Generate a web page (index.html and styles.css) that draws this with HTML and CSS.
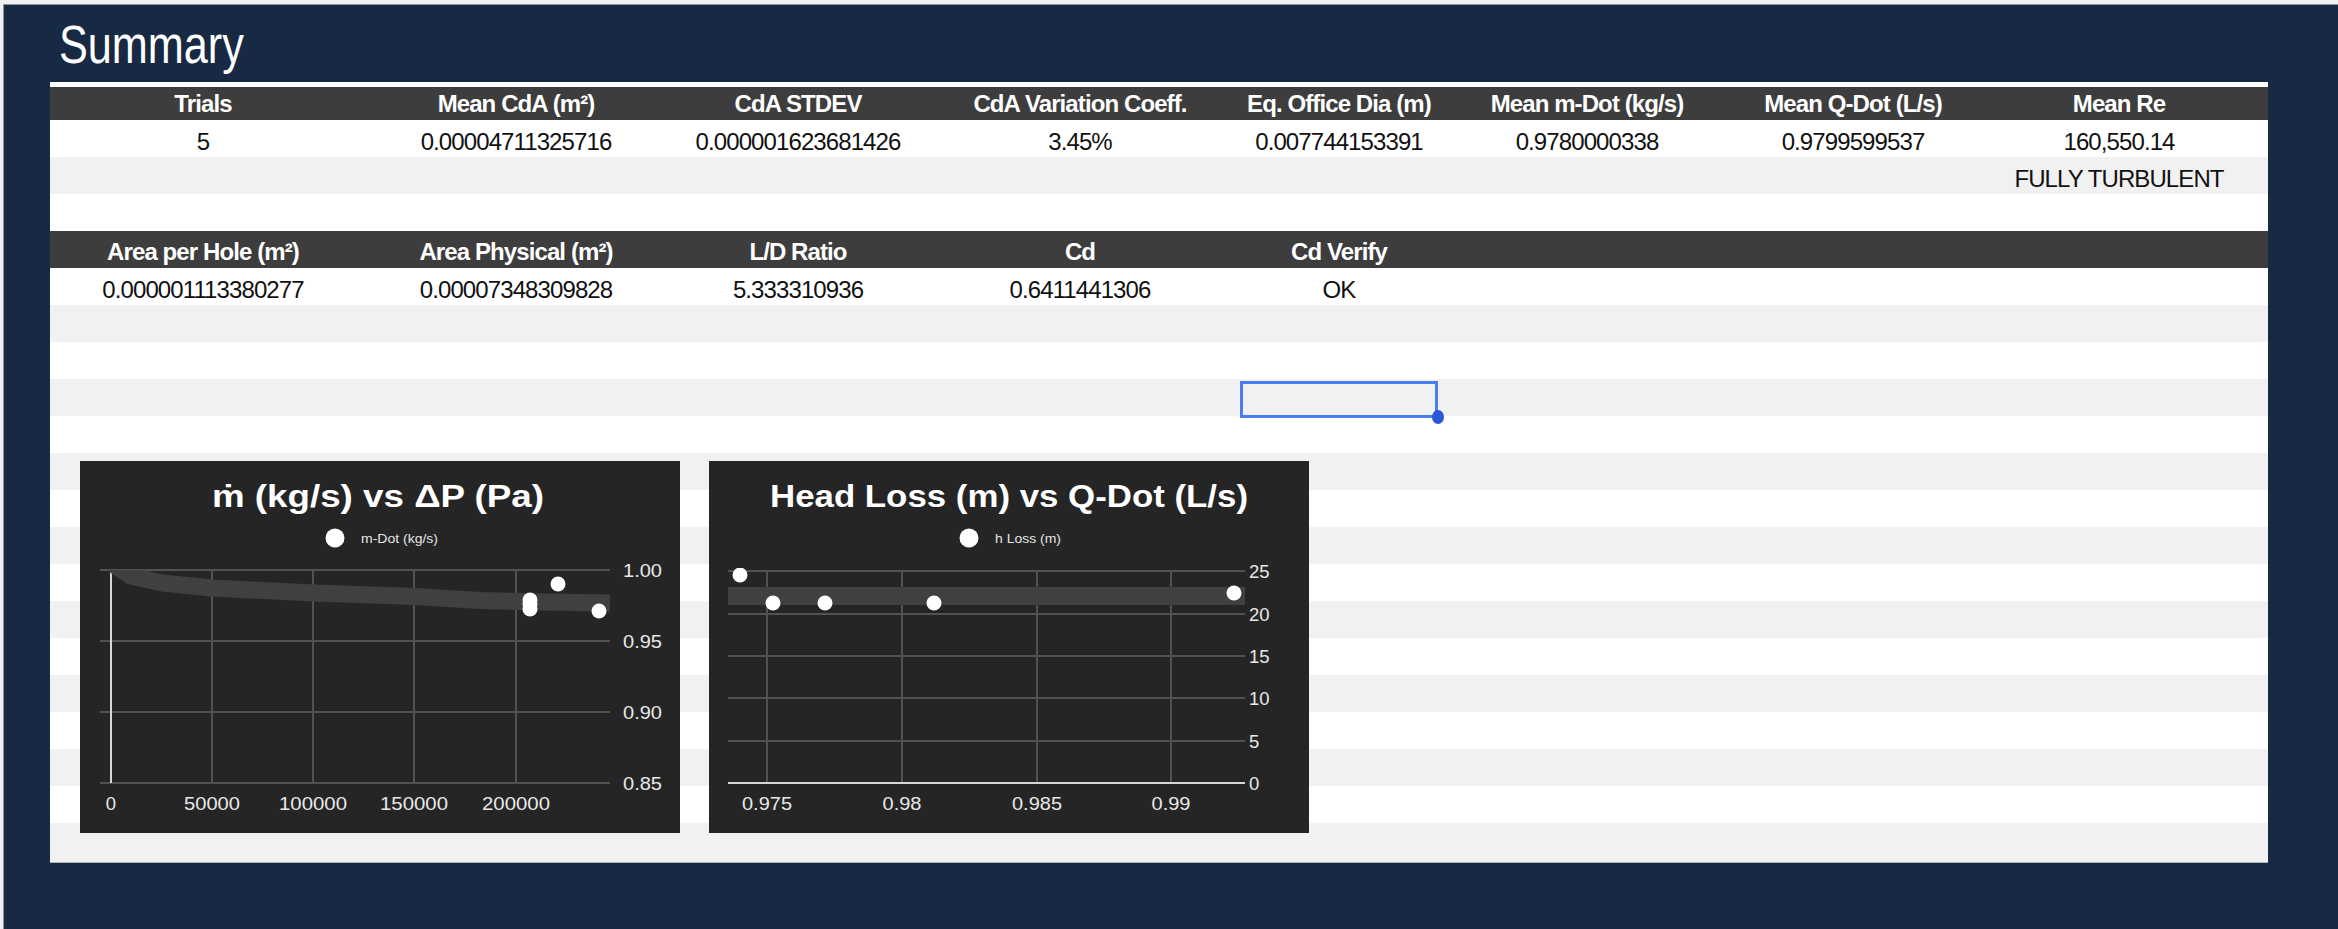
FILE: index.html
```html
<!DOCTYPE html>
<html lang="en">
<head>
<meta charset="utf-8">
<title>Summary</title>
<link rel="stylesheet" href="styles.css">
</head>
<body>
<div class="sheet">
  <h1 class="title">Summary</h1>
  <div class="panel">
    <div class="row head head1">
      <div class="cell">Trials</div>
      <div class="cell">Mean CdA (m²)</div>
      <div class="cell">CdA STDEV</div>
      <div class="cell">CdA Variation Coeff.</div>
      <div class="cell">Eq. Office Dia (m)</div>
      <div class="cell">Mean m-Dot (kg/s)</div>
      <div class="cell">Mean Q-Dot (L/s)</div>
      <div class="cell">Mean Re</div>
    </div>
    <div class="row">
      <div class="cell">5</div>
      <div class="cell">0.00004711325716</div>
      <div class="cell">0.000001623681426</div>
      <div class="cell">3.45%</div>
      <div class="cell">0.007744153391</div>
      <div class="cell">0.9780000338</div>
      <div class="cell">0.9799599537</div>
      <div class="cell">160,550.14</div>
    </div>
    <div class="row alt">
      <div class="cell"></div><div class="cell"></div><div class="cell"></div><div class="cell"></div>
      <div class="cell"></div><div class="cell"></div><div class="cell"></div>
      <div class="cell">FULLY TURBULENT</div>
    </div>
    <div class="row"></div>
    <div class="row head">
      <div class="cell">Area per Hole (m²)</div>
      <div class="cell">Area Physical (m²)</div>
      <div class="cell">L/D Ratio</div>
      <div class="cell">Cd</div>
      <div class="cell">Cd Verify</div>
    </div>
    <div class="row">
      <div class="cell">0.000001113380277</div>
      <div class="cell">0.00007348309828</div>
      <div class="cell">5.333310936</div>
      <div class="cell">0.6411441306</div>
      <div class="cell">OK</div>
    </div>
    <div class="row alt"></div>
    <div class="row"></div>
    <div class="row alt">
      <div class="cell"></div><div class="cell"></div><div class="cell"></div><div class="cell"></div>
      <div class="cell selected"><span class="handle"></span></div>
    </div>
    <div class="row"></div>
    <div class="row alt"></div>
    <div class="row"></div>
    <div class="row alt"></div>
    <div class="row"></div>
    <div class="row alt"></div>
    <div class="row"></div>
    <div class="row alt"></div>
    <div class="row"></div>
    <div class="row alt"></div>
    <div class="row"></div>
    <div class="row alt last"></div>

    <div class="chart chart-mdot">
      <svg width="600" height="372" viewBox="0 0 600 372">
        <defs>
          <clipPath id="plot1"><rect x="20" y="109" width="510" height="213"/></clipPath>
        </defs>
        <text class="c-title" x="298" y="46" text-anchor="middle" textLength="332" lengthAdjust="spacingAndGlyphs">ṁ (kg/s) vs ΔP (Pa)</text>
        <circle cx="255" cy="77" r="9.5" fill="#fff"/>
        <text class="c-legend" x="281" y="82" textLength="77" lengthAdjust="spacingAndGlyphs">m-Dot (kg/s)</text>
        <g class="grid">
          <line x1="20" y1="109" x2="530" y2="109"/>
          <line x1="20" y1="180" x2="530" y2="180"/>
          <line x1="20" y1="251" x2="530" y2="251"/>
          <line x1="20" y1="322" x2="530" y2="322"/>
          <line x1="132" y1="109" x2="132" y2="322"/>
          <line x1="233" y1="109" x2="233" y2="322"/>
          <line x1="334" y1="109" x2="334" y2="322"/>
          <line x1="436" y1="109" x2="436" y2="322"/>
        </g>
        <line class="axis" x1="31" y1="109" x2="31" y2="322"/>
        <polyline class="band" clip-path="url(#plot1)" points="33,103 37,106 51,115 82,122 132,127 234,132 335,135.5 400,139.5 436,140.5 530,142"/>
        <g fill="#fff">
          <circle cx="450" cy="139" r="7.5"/>
          <circle cx="450" cy="143" r="7.5"/>
          <circle cx="450" cy="148" r="7.5"/>
          <circle cx="478" cy="123" r="7.5"/>
          <circle cx="519" cy="150" r="7.5"/>
        </g>
        <g class="c-label">
          <text x="543" y="115.5" textLength="39" lengthAdjust="spacingAndGlyphs">1.00</text>
          <text x="543" y="186.5" textLength="39" lengthAdjust="spacingAndGlyphs">0.95</text>
          <text x="543" y="257.5" textLength="39" lengthAdjust="spacingAndGlyphs">0.90</text>
          <text x="543" y="328.5" textLength="39" lengthAdjust="spacingAndGlyphs">0.85</text>
        </g>
        <g class="c-label" text-anchor="middle">
          <text x="31" y="349">0</text>
          <text x="132" y="349" textLength="56" lengthAdjust="spacingAndGlyphs">50000</text>
          <text x="233" y="349" textLength="68" lengthAdjust="spacingAndGlyphs">100000</text>
          <text x="334" y="349" textLength="68" lengthAdjust="spacingAndGlyphs">150000</text>
          <text x="436" y="349" textLength="68" lengthAdjust="spacingAndGlyphs">200000</text>
        </g>
      </svg>
    </div>

    <div class="chart chart-head">
      <svg width="600" height="372" viewBox="0 0 600 372">
        <defs>
          <clipPath id="plot2"><rect x="19" y="107" width="530" height="220"/></clipPath>
        </defs>
        <text class="c-title" x="300" y="46" text-anchor="middle" textLength="478" lengthAdjust="spacingAndGlyphs">Head Loss (m) vs Q-Dot (L/s)</text>
        <circle cx="260" cy="77" r="9.5" fill="#fff"/>
        <text class="c-legend" x="286" y="82" textLength="66" lengthAdjust="spacingAndGlyphs">h Loss (m)</text>
        <g class="grid">
          <line x1="19" y1="110" x2="536" y2="110"/>
          <line x1="19" y1="153" x2="536" y2="153"/>
          <line x1="19" y1="195" x2="536" y2="195"/>
          <line x1="19" y1="237" x2="536" y2="237"/>
          <line x1="19" y1="280" x2="536" y2="280"/>
          <line x1="58" y1="110" x2="58" y2="322"/>
          <line x1="193" y1="110" x2="193" y2="322"/>
          <line x1="328" y1="110" x2="328" y2="322"/>
          <line x1="462" y1="110" x2="462" y2="322"/>
        </g>
        <line class="axis" x1="19" y1="322" x2="536" y2="322"/>
        <rect class="band-rect" x="19" y="126" width="517" height="18"/>
        <g fill="#fff" clip-path="url(#plot2)">
          <circle cx="31" cy="114" r="7.5"/>
          <circle cx="64" cy="142" r="7.5"/>
          <circle cx="116" cy="142" r="7.5"/>
          <circle cx="225" cy="142" r="7.5"/>
          <circle cx="525" cy="132" r="7.5"/>
        </g>
        <g class="c-label">
          <text x="540" y="116.5">25</text>
          <text x="540" y="159.5">20</text>
          <text x="540" y="201.5">15</text>
          <text x="540" y="243.5">10</text>
          <text x="540" y="286.5">5</text>
          <text x="540" y="328.5">0</text>
        </g>
        <g class="c-label" text-anchor="middle">
          <text x="58" y="349" textLength="50" lengthAdjust="spacingAndGlyphs">0.975</text>
          <text x="193" y="349" textLength="39" lengthAdjust="spacingAndGlyphs">0.98</text>
          <text x="328" y="349" textLength="50" lengthAdjust="spacingAndGlyphs">0.985</text>
          <text x="462" y="349" textLength="39" lengthAdjust="spacingAndGlyphs">0.99</text>
        </g>
      </svg>
    </div>
  </div>
</div>
</body>
</html>
```
FILE: styles.css
```css
html, body {
  margin: 0;
  padding: 0;
}
body {
  background: #f2f2f2;
  font-family: "Liberation Sans", Arial, sans-serif;
  overflow: hidden;
}
.sheet {
  box-sizing: border-box;
  margin: 4px 0 0 3px;
  height: 925px;
  background: #172943;
  border-top: 1px solid #8d949e;
  border-left: 1px solid #8d949e;
  padding: 13px 0 0 46px;
}
.title {
  margin: 0 0 11px 9px;
  font-family: "Liberation Sans", Arial, sans-serif;
  font-weight: normal;
  font-size: 53px;
  line-height: 53px;
  color: #ffffff;
  transform: scaleX(0.815);
  transform-origin: left center;
}
.panel {
  position: relative;
  width: 2218px;
  background: #f1f1f1;
  padding-top: 5px;
  padding-bottom: 2px;
  border-bottom: 1px solid #aab1ba;
  box-shadow: inset 0 5px 0 #ffffff;
}
.row {
  display: grid;
  grid-template-columns: 306px 320px 244px 320px 198px 298px 234px 298px;
  height: 37px;
  align-items: end;
  background: #ffffff;
  color: #111111;
  font-size: 24px;
  letter-spacing: -0.9px;
}
.row.alt {
  background: #f1f1f1;
}
.row.head {
  background: #3d3d3d;
  color: #ffffff;
  font-weight: bold;
}
.row.head1 {
  height: 33px;
}
.cell {
  line-height: 24px;
  padding-bottom: 3px;
  text-align: center;
  white-space: nowrap;
}
.head .cell {
  padding-bottom: 4px;
}
.cell.selected {
  position: relative;
  align-self: start;
  box-sizing: border-box;
  height: 37px;
  margin-top: 2px;
  border: 3px solid #4a7ef0;
  padding: 0;
}
.handle {
  position: absolute;
  right: -9px;
  bottom: -9px;
  width: 12px;
  height: 14px;
  border-radius: 50%;
  background: #2b58d6;
}
.chart {
  position: absolute;
  top: 379px;
  width: 600px;
  height: 372px;
  background: #252525;
}
.chart svg {
  display: block;
}
.chart-mdot {
  left: 30px;
}
.chart-head {
  left: 659px;
}
.c-title {
  font-family: "Liberation Sans", Arial, sans-serif;
  font-weight: bold;
  font-size: 31px;
  fill: #ffffff;
}
.c-legend {
  font-family: "Liberation Sans", Arial, sans-serif;
  font-size: 13.5px;
  fill: #e6e6e6;
}
.c-label {
  font-family: "Liberation Sans", Arial, sans-serif;
  font-size: 18.5px;
  fill: #e8e8e8;
}
.grid line {
  stroke: #525252;
  stroke-width: 2;
}
.axis {
  stroke: #d6d6d6;
  stroke-width: 2;
}
.band {
  fill: none;
  stroke: #404040;
  stroke-width: 17;
  stroke-linejoin: round;
}
.band-rect {
  fill: #404040;
}
```
